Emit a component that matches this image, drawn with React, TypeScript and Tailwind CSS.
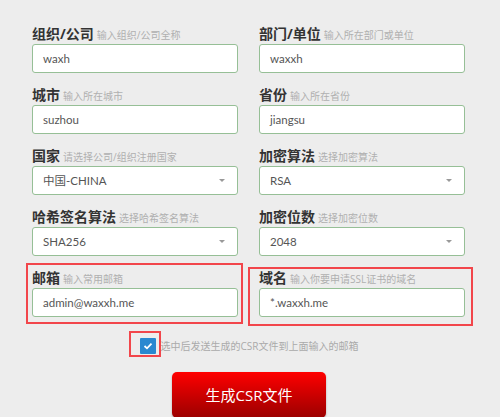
import React from "react";

type Field = {
  label: string;
  hint: string;
  value: string;
  select?: boolean;
  mark?: "left" | "right";
};

const rows: Field[][] = [
  [
    { label: "组织/公司", hint: "输入组织/公司全称", value: "waxh" },
    { label: "部门/单位", hint: "输入所在部门或单位", value: "waxxh" },
  ],
  [
    { label: "城市", hint: "输入所在城市", value: "suzhou" },
    { label: "省份", hint: "输入所在省份", value: "jiangsu" },
  ],
  [
    { label: "国家", hint: "请选择公司/组织注册国家", value: "中国-CHINA", select: true },
    { label: "加密算法", hint: "选择加密算法", value: "RSA", select: true },
  ],
  [
    { label: "哈希签名算法", hint: "选择哈希签名算法", value: "SHA256", select: true },
    { label: "加密位数", hint: "选择加密位数", value: "2048", select: true },
  ],
  [
    { label: "邮箱", hint: "输入常用邮箱", value: "admin@waxxh.me", mark: "left" },
    { label: "域名", hint: "输入你要申请SSL证书的域名", value: "*.waxxh.me", mark: "right" },
  ],
];

function FormField({ f }: { f: Field }) {
  return (
    <div className="relative w-[206px]">
      {f.mark === "left" && (
        <div className="absolute -left-[6px] -top-[6px] -right-[5px] -bottom-[7px] border-2 border-[#f2464b] pointer-events-none" />
      )}
      {f.mark === "right" && (
        <div className="absolute -left-[11px] -top-[2px] -right-[8px] -bottom-[9px] border-2 border-[#f2464b] pointer-events-none" />
      )}
      <div className="h-[17px] mb-[2px] flex items-baseline leading-[17px] whitespace-nowrap">
        <span className="text-[14px] font-bold text-[#333]">{f.label}</span>
        <span className="ml-[3px] text-[10px] text-[#b0b0b0]">{f.hint}</span>
      </div>
      <div
        className="h-[29px] bg-white border border-[#96bf96] rounded-[3px] flex items-center justify-between pl-[10px] pr-[10px] text-[11.5px] text-[#555]"
        style={{ fontFamily: 'Lato, "Noto Sans CJK SC", sans-serif' }}
      >
        <span>{f.value}</span>
        {f.select && (
          <span className="w-0 h-0 border-l-[3px] border-r-[3px] border-t-[3px] border-l-transparent border-r-transparent border-t-[#999] mr-[2px]" />
        )}
      </div>
    </div>
  );
}

export default function App() {
  return (
    <div
      className="w-[500px] h-[417px] overflow-hidden bg-[#ededed] pt-[25px]"
      style={{ fontFamily: '"Open Sans", "Noto Sans CJK SC", sans-serif' }}
    >
      <div className="flex flex-col gap-[13px] pl-[32px]">
        {rows.map((r, i) => (
          <div key={i} className="flex gap-[21px]">
            {r.map((f) => (
              <FormField key={f.label} f={f} />
            ))}
          </div>
        ))}
      </div>

      {/* send-to-email checkbox */}
      <div className="flex items-center justify-center mt-[21px] pr-[2px]">
        <div className="relative w-[16px] h-[16px] rounded-[1px] bg-[#2a88d0] flex items-center justify-center">
          <div className="absolute -left-[11px] -top-[7px] w-[32px] h-[26px] border-2 border-[#f2464b]" />
          <svg width="10" height="8" viewBox="0 0 10 8">
            <path d="M1.5 4 L4 6.3 L8.5 1.7" fill="none" stroke="white" strokeWidth="1.8" />
          </svg>
        </div>
        <span className="ml-[5px] text-[10px] text-[#aaa] leading-[16px]">
          选中后发送生成的CSR文件到上面输入的邮箱
        </span>
      </div>

      <div className="flex justify-center mt-[18px] pr-[2px]">
        <button className="w-[154px] h-[46px] rounded-[5px] bg-gradient-to-b from-[#ff0000] to-[#9b0000] text-white text-[15px] shadow-[0_1px_2px_rgba(0,0,0,0.3)]">
          生成CSR文件
        </button>
      </div>
    </div>
  );
}
